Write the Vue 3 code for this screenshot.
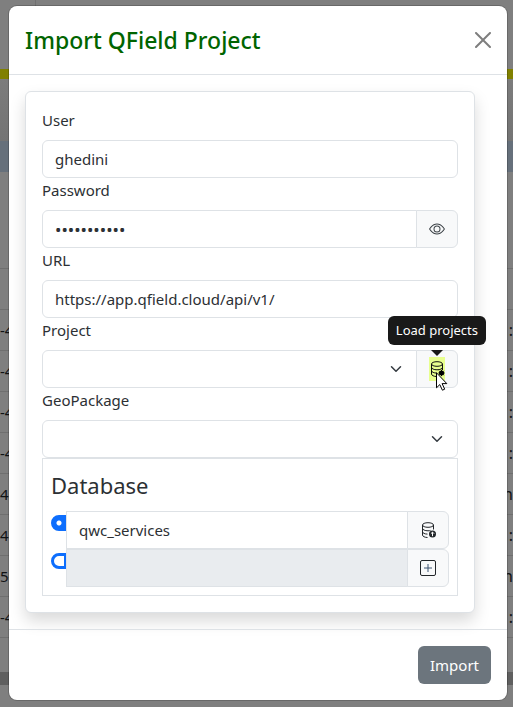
<script setup>
import { ref } from 'vue'

const user = ref('ghedini')
const password = ref('abcdefghijk')
const url = ref('https://app.qfield.cloud/api/v1/')
const database = ref('qwc_services')
const newDatabase = ref('')
const mode = ref('existing')

const rows = [
  { left: '', right: '' },
  { left: '-4', right: ':' },
  { left: '-4', right: ':' },
  { left: '-4', right: ':' },
  { left: '-4', right: ':' },
  { left: '4', right: 'n' },
  { left: '47', right: ':' },
  { left: '5-', right: 'n' },
  { left: '-4', right: ':' },
]
</script>

<template>
  <div class="page">
    <div class="backdrop" aria-hidden="true">
      <div class="bg-top"><div class="bg-tab"></div></div>
      <div class="bg-accent"></div>
      <div class="bg-panel"></div>
      <div class="bg-head"></div>
      <div class="bg-gap"></div>
      <div v-for="(row, i) in rows" :key="i" class="bg-row">
        <span>{{ row.left }}</span>
        <span class="bg-right">{{ row.right }}</span>
      </div>
      <div class="bg-space"></div>
      <div class="bg-scroll"></div>
    </div>

    <div class="modal" role="dialog" aria-labelledby="title">
      <header class="modal-header">
        <h5 id="title" class="modal-title">Import QField Project</h5>
        <button type="button" class="close" aria-label="Close">
          <svg viewBox="0 0 16 16" width="16" height="16" fill="#000"><path d="M.293.293a1 1 0 0 1 1.414 0L8 6.586 14.293.293a1 1 0 1 1 1.414 1.414L9.414 8l6.293 6.293a1 1 0 0 1-1.414 1.414L8 9.414l-6.293 6.293a1 1 0 0 1-1.414-1.414L6.586 8 .293 1.707a1 1 0 0 1 0-1.414z" /></svg>
        </button>
      </header>

      <div class="modal-body">
        <div class="card">
          <label class="label" for="user">User</label>
          <input id="user" v-model="user" class="control" type="text" />

          <label class="label" for="password">Password</label>
          <div class="group">
            <input id="password" v-model="password" class="control secret" type="password" />
            <button type="button" class="addon" aria-label="Show password">
              <svg viewBox="0 0 16 16" width="16" height="16" fill="#3c4247"><path d="M16 8s-3-5.500-8-5.500S0 8 0 8s3 5.500 8 5.500S16 8 16 8M1.173 8a13 13 0 0 1 1.660-2.043C4.120 4.668 5.880 3.500 8 3.500s3.879 1.168 5.168 2.457A13 13 0 0 1 14.828 8q-.086.130-.195.288c-.335.480-.830 1.120-1.465 1.755C11.879 11.332 10.119 12.500 8 12.500s-3.879-1.168-5.168-2.457A13 13 0 0 1 1.172 8z" /><path d="M8 5.500a2.500 2.500 0 1 0 0 5 2.500 2.500 0 0 0 0-5M4.500 8a3.500 3.500 0 1 1 7 0 3.500 3.500 0 0 1-7 0" /></svg>
            </button>
          </div>

          <label class="label" for="url">URL</label>
          <input id="url" v-model="url" class="control" type="text" />

          <label class="label" for="project">Project</label>
          <div class="group">
            <div class="select-wrap">
              <select id="project" class="control select"><option value=""></option></select>
              <svg class="chevron" viewBox="0 0 16 16" width="16" height="12"><path d="m2 5 6 6 6-6" /></svg>
            </div>
            <button type="button" class="addon" aria-label="Load projects" aria-describedby="tip">
              <span class="mark">
                <svg viewBox="0 0 16 16" width="16" height="16"><g fill="none" stroke="#111"><ellipse cx="8" cy="3" rx="5.500" ry="2.300" /><path d="M2.500 3v10c0 1.300 2.200 2.500 5 2.500M13.500 3v6M2.500 6.300c0 1.400 2.400 2.500 5.500 2.500s5.500-1.100 5.500-2.500M2.500 9.600c0 1.400 2.400 2.500 5.500 2.500" /></g><circle cx="12.500" cy="12" r="2.500" fill="#000" /><path d="M12.500 8.900v6.200M9.400 12h6.200M10.300 9.800l4.400 4.400M14.700 9.800l-4.400 4.400" stroke="#000" /></svg>
              </span>
              <svg class="cursor" viewBox="0 0 12 19" width="12" height="19"><path d="M.5.8v15l3.300-3.200 2.600 5.600 2.300-1-2.600-5.600h4.700z" fill="#fff" stroke="#000" /></svg>
            </button>
            <div id="tip" class="tooltip" role="tooltip">Load projects</div>
          </div>

          <label class="label" for="geopackage">GeoPackage</label>
          <div class="select-wrap">
            <select id="geopackage" class="control select"><option value=""></option></select>
            <svg class="chevron" viewBox="0 0 16 16" width="16" height="12"><path d="m2 5 6 6 6-6" /></svg>
          </div>

          <section class="database">
            <h4 class="db-title">Database</h4>
            <div class="db-row">
              <input v-model="mode" class="radio" type="radio" name="mode" value="existing" aria-label="Existing database" />
              <div class="group">
                <input v-model="database" class="control square" type="text" aria-label="Database name" />
                <button type="button" class="addon" aria-label="Upload database">
                  <svg viewBox="0 0 16 16" width="16" height="16"><g fill="none" stroke="#212529"><ellipse cx="8" cy="3" rx="5.500" ry="2.300" /><path d="M2.500 3v10c0 1.300 2.200 2.500 5 2.500M13.500 3v4.500M2.500 6.300c0 1.400 2.400 2.500 5.500 2.500 1.200 0 2-.2 2.500-.4M2.500 9.600c0 1.400 2.200 2.500 5 2.500" /></g><circle cx="12.500" cy="12" r="3.500" fill="#212529" /><path d="M12.500 14.200v-4M10.900 11.700l1.600-1.600 1.600 1.600" fill="none" stroke="#fff" /></svg>
                </button>
              </div>
            </div>
            <div class="db-row">
              <input v-model="mode" class="radio" type="radio" name="mode" value="new" aria-label="New database" />
              <div class="group">
                <input v-model="newDatabase" class="control square" type="text" disabled aria-label="New database name" />
                <button type="button" class="addon" aria-label="Add database">
                  <svg viewBox="0 0 16 16" width="16" height="16"><rect x=".5" y=".5" width="15" height="15" rx="1.500" fill="none" stroke="#212529" /><path d="M8 4v8M4 8h8" fill="none" stroke="#3d5573" /></svg>
                </button>
              </div>
            </div>
          </section>
        </div>
      </div>

      <footer class="modal-footer">
        <button type="button" class="primary">Import</button>
      </footer>
    </div>
  </div>
</template>

<style>
body {
  background: #7f7f7f;
}
</style>

<style scoped>
* {
  box-sizing: border-box;
}

.page {
  position: relative;
  padding: 6px 6px 7px 9px;
  overflow: hidden;
  font-family: "Segoe UI", "Noto Sans", "Open Sans", sans-serif;
  font-size: 15px;
  line-height: 24px;
  color: #2c3034;
}

button,
input,
select {
  font: inherit;
  color: inherit;
  margin: 0;
}

.backdrop {
  position: absolute;
  inset: 0;
  display: flex;
  flex-direction: column;
}

.bg-top { height: 69px; }
.bg-tab { width: 36px; height: 100%; border-right: 1px solid #707070; }
.bg-accent { height: 10px; background: #808000; }
.bg-panel { height: 62px; background: linear-gradient(#7c7c7c, #747474); }
.bg-head { height: 31px; background: #66707b; }
.bg-gap { height: 97px; border-bottom: 1px solid #6f6f6f; }
.bg-row {
  height: 41px;
  border-bottom: 1px solid #6f6f6f;
  display: flex;
  justify-content: space-between;
  align-items: center;
  color: #101214;
}
.bg-right { font-size: 16px; }
.bg-space { height: 34px; }
.bg-scroll { height: 13px; background: #5f5f5f; }

.modal {
  position: relative;
  background: #fff;
  border-radius: 8px;
  box-shadow: 0 0 0 1px rgba(0, 0, 0, 0.18);
}

.modal-header {
  display: flex;
  align-items: center;
  justify-content: space-between;
  height: 69px;
  padding: 0 16px;
  border-bottom: 1px solid #dee2e6;
}

.modal-title {
  margin: 0;
  font-size: 23px;
  line-height: 36px;
  font-weight: 500;
  color: #006400;
}

.close {
  display: flex;
  padding: 0;
  border: 0;
  background: none;
  opacity: 0.5;
}

.modal-body {
  padding: 16px 32px 16px 16px;
}

.card {
  padding: 16px;
  border: 1px solid #dee2e6;
  border-radius: 6px;
  background: #fff;
  box-shadow: 0 8px 16px rgba(0, 0, 0, 0.15);
}

.label {
  display: block;
  height: 32px;
}

.control {
  display: block;
  width: 100%;
  height: 38px;
  padding: 6px 12px;
  border: 1px solid #dee2e6;
  border-radius: 6px;
  background: #fff;
  outline: 0;
}

.secret {
  font-size: 17px;
}

.group {
  position: relative;
  display: flex;
  flex: 1;
  min-width: 0;
}

.group .control {
  border-radius: 6px 0 0 6px;
}

.group > .control,
.group > .select-wrap {
  flex: 1;
  min-width: 0;
}

.group .control.square {
  border-radius: 0;
}

.control:disabled {
  background: #e9ecef;
}

.addon {
  position: relative;
  display: flex;
  align-items: center;
  justify-content: center;
  width: 42px;
  height: 38px;
  margin-left: -1px;
  padding: 0;
  border: 1px solid #dee2e6;
  border-radius: 0 6px 6px 0;
  background: #f8f9fa;
}

.select-wrap {
  position: relative;
}

.select {
  appearance: none;
  padding-right: 36px;
}

.chevron {
  position: absolute;
  right: 13px;
  top: 13px;
  pointer-events: none;
  fill: none;
  stroke: #343a40;
  stroke-width: 2;
  stroke-linecap: round;
  stroke-linejoin: round;
}

.mark {
  display: flex;
  align-items: center;
  height: 24px;
  background: #e8ff8f;
}

.cursor {
  position: absolute;
  left: 19px;
  top: 21px;
}

.tooltip {
  position: absolute;
  right: -28px;
  bottom: 43px;
  padding: 4px 8px;
  border-radius: 6px;
  background: #191919;
  color: #fff;
  font-size: 13px;
  line-height: 21px;
  white-space: nowrap;
}

.tooltip::after {
  content: "";
  position: absolute;
  left: 50%;
  top: 100%;
  margin-left: -6px;
  margin-top: 5px;
  border: 6px solid transparent;
  border-top-color: #191919;
  border-bottom: 0;
}

.database {
  padding: 8px;
  border: 1px solid #dee2e6;
}

.db-title {
  margin: 0 0 8px;
  font-size: 22px;
  line-height: 36px;
  font-weight: 400;
}

.db-row {
  display: flex;
}

.radio {
  appearance: none;
  flex: none;
  width: 15px;
  height: 16px;
  margin-top: 4px;
  border: 3px solid #0d6efd;
  border-right-width: 2px;
  border-radius: 8px 0 0 8px;
  background: #fff;
}

.radio:checked {
  background: radial-gradient(circle at 5px 5px, #fff 2px, #0d6efd 3px);
}

.modal-footer {
  display: flex;
  justify-content: flex-end;
  padding: 16px;
  border-top: 1px solid #dee2e6;
}

.primary {
  height: 38px;
  padding: 0 12px;
  border: 0;
  border-radius: 6px;
  background: #6c757d;
  color: #fff;
}
</style>
